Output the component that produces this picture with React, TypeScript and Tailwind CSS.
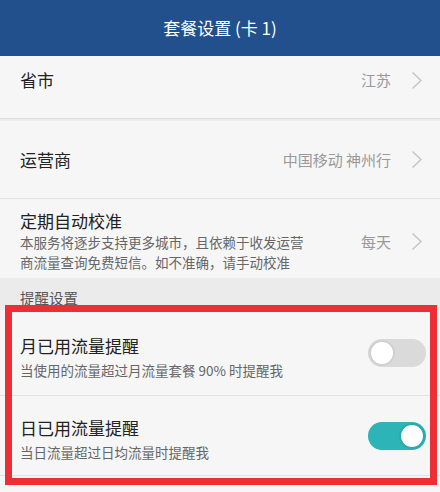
import { useState } from "react";

const font = { fontFamily: '"Noto Sans CJK SC", "Noto Sans", sans-serif' };

function Chevron() {
  return (
    <svg width="12" height="19" viewBox="0 0 12 19" className="shrink-0">
      <path d="M1.5 1.5 L10 9.5 L1.5 17.5" fill="none" stroke="#c4c4c4" strokeWidth="1.4" />
    </svg>
  );
}

function Toggle({ on, onClick }: { on: boolean; onClick: () => void }) {
  return (
    <button
      onClick={onClick}
      className={`relative h-[28px] w-[58px] shrink-0 rounded-full ${on ? "bg-[#2cb4b6]" : "bg-[#dadada]"}`}
    >
      <span
        className={`absolute top-[1px] h-[26px] w-[26px] rounded-full border-2 bg-white ${
          on ? "right-[1px] border-[#2aa9ab]" : "left-[1px] border-[#d0d0d0]"
        }`}
      />
    </button>
  );
}

export default function App() {
  const [monthly, setMonthly] = useState(false);
  const [daily, setDaily] = useState(true);

  return (
    <div className="relative h-[492px] w-[440px] overflow-hidden bg-[#f6f6f6]" style={font}>
      {/* Header */}
      <div className="flex h-[56px] items-center justify-center bg-[#21508c] text-[17px] text-white">
        套餐设置 (卡 1)
      </div>

      {/* 省市 */}
      <div className="flex h-[62px] items-start justify-between pl-5 pr-[17px] pt-[12px]">
        <span className="text-[17px] leading-[24px] text-[#222]">省市</span>
        <div className="flex items-center gap-5">
          <span className="text-[15px] leading-[24px] text-[#999]">江苏</span>
          <Chevron />
        </div>
      </div>
      <div className="h-[3px] border-t border-[#dedede] bg-[#ececec]" />

      {/* 运营商 */}
      <div className="flex h-[77px] items-center justify-between pl-5 pr-[17px]">
        <span className="text-[17px] leading-[24px] text-[#222]">运营商</span>
        <div className="flex items-center gap-5">
          <span className="text-[15px] leading-[24px] text-[#999]">中国移动 神州行</span>
          <Chevron />
        </div>
      </div>
      <div className="h-px bg-[#e2e2e2]" />

      {/* 定期自动校准 */}
      <div className="flex h-[79px] items-center justify-between pl-5 pr-[17px]">
        <div className="flex flex-col pt-[4px]">
          <span className="text-[17px] leading-[22px] text-[#222]">定期自动校准</span>
          <span className="text-[13.5px] leading-[20px] text-[#666]">
            本服务将逐步支持更多城市，且依赖于收发运营
            <br />
            商流量查询免费短信。如不准确，请手动校准
          </span>
        </div>
        <div className="flex items-center gap-5 pt-[6px]">
          <span className="text-[15px] leading-[24px] text-[#999]">每天</span>
          <Chevron />
        </div>
      </div>

      {/* 提醒设置 */}
      <div className="h-[32px] bg-[#ebebeb] pl-5 pt-[10px] text-[14.5px] leading-[20px] text-[#555]">
        提醒设置
      </div>

      {/* 月已用流量提醒 */}
      <div className="flex h-[85px] items-center justify-between pl-5 pr-[14px]">
        <div className="flex flex-col gap-[2px] pt-[8px]">
          <span className="text-[17px] leading-[24px] text-[#222]">月已用流量提醒</span>
          <span className="text-[13.5px] leading-[20px] text-[#666]">
            当使用的流量超过月流量套餐 90% 时提醒我
          </span>
        </div>
        <Toggle on={monthly} onClick={() => setMonthly(!monthly)} />
      </div>
      <div className="h-px bg-[#e2e2e2]" />

      {/* 日已用流量提醒 */}
      <div className="flex h-[79px] items-center justify-between pl-5 pr-[14px]">
        <div className="flex flex-col gap-[2px] pt-[6px]">
          <span className="text-[17px] leading-[24px] text-[#222]">日已用流量提醒</span>
          <span className="text-[13.5px] leading-[20px] text-[#666]">当日流量超过日均流量时提醒我</span>
        </div>
        <Toggle on={daily} onClick={() => setDaily(!daily)} />
      </div>
      <div className="h-px bg-[#e2e2e2]" />

      {/* Red annotation box */}
      <div className="pointer-events-none absolute left-[5px] top-[305px] h-[180px] w-[432px] border-[7px] border-[#ec2f37]" />
    </div>
  );
}
